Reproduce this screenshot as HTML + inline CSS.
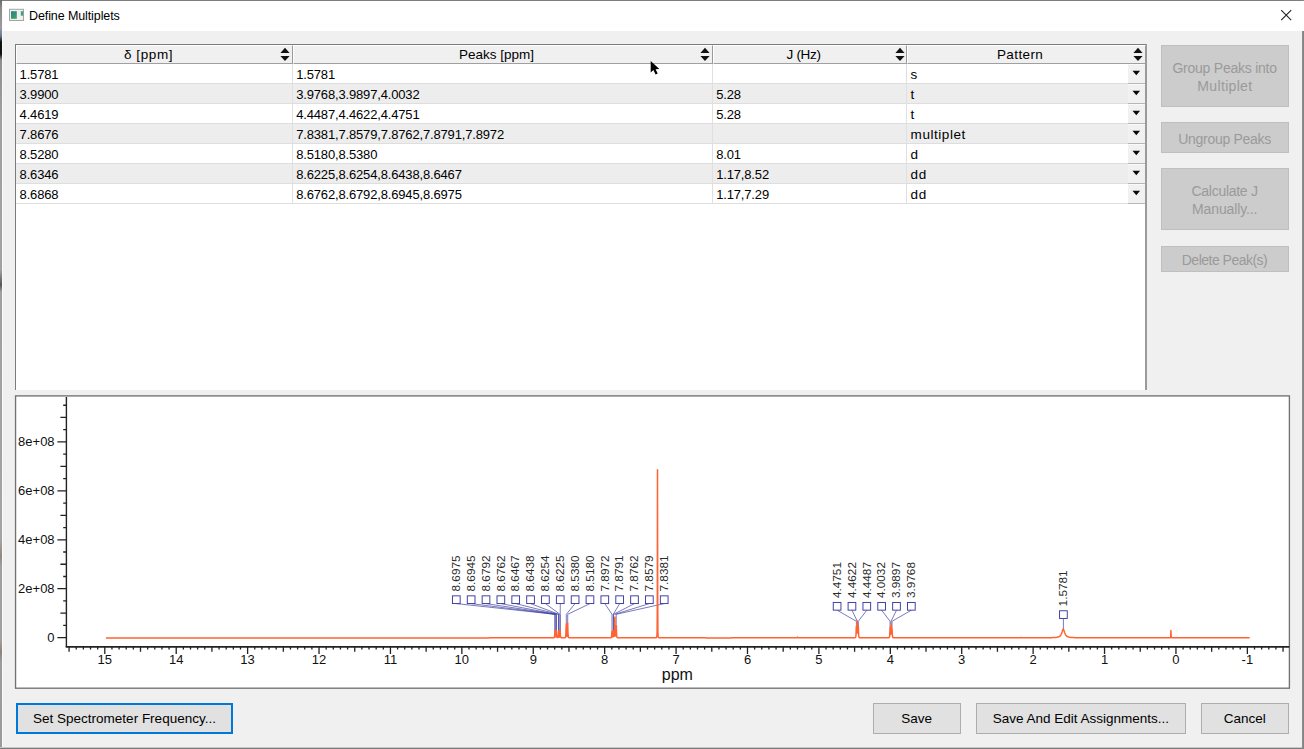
<!DOCTYPE html>
<html><head><meta charset="utf-8"><title>Define Multiplets</title>
<style>
html,body{margin:0;padding:0;}
body{width:1304px;height:749px;overflow:hidden;background:#3a3a3c;font-family:"Liberation Sans",sans-serif;position:relative;}
.abs{position:absolute;}
#win{position:absolute;left:2px;top:1px;width:1300px;height:746px;background:#f0f0f0;border-left:1px solid #fafafa;box-sizing:border-box;}
#title{position:absolute;left:0;top:0;width:1301px;height:29.5px;background:#fff;}
#ttext{position:absolute;left:27px;top:7px;font-size:12.5px;line-height:16px;color:#000;white-space:nowrap;letter-spacing:-0.1px;}
.tbl{position:absolute;left:15px;top:44px;width:1132px;height:346px;background:#fff;border:1px solid #7c7c7c;border-bottom:none;border-right:2px solid #9a9a9a;box-sizing:border-box;}
.hdr{position:absolute;top:45px;height:17px;background:#f0f0f0;border-top:1px solid #fff;border-left:1px solid #fff;border-bottom:1px solid #a0a0a0;border-right:1px solid #9a9a9a;box-sizing:content-box;}
.ht{position:absolute;top:45px;height:19px;line-height:19px;font-size:13.5px;color:#000;text-align:center;white-space:nowrap;}
.row{position:absolute;left:16px;width:1129px;height:19px;border-bottom:1px solid #dedede;}
.alt{background:#ededed;}
.c{position:absolute;font-size:13px;line-height:20px;height:20px;color:#000;white-space:nowrap;letter-spacing:-0.16px;}
.vl{position:absolute;width:1px;background:#e0e0e0;top:64px;height:140px;}
.cb{position:absolute;left:1128px;width:17px;height:20px;background:#f1f1f1;border-bottom:1px solid #b8b8b8;border-top:1px solid #fafafa;box-sizing:border-box;}
.dbtn{position:absolute;left:1160.5px;width:128.5px;background:#cccccc;border:1px solid #bfbfbf;box-sizing:border-box;color:#9a9a9a;font-size:14px;text-align:center;white-space:nowrap;}
.btn{position:absolute;top:703px;height:31px;background:#e1e1e1;border:1px solid #adadad;box-sizing:border-box;color:#000;font-size:13.5px;line-height:29.6px;text-align:center;white-space:nowrap;}
</style></head><body>

<div class="abs" style="left:0;top:0;width:1304px;height:1px;background:#7e7e7e"></div>
<div class="abs" style="left:0;top:0;width:2px;height:749px;background:linear-gradient(#6a6a6a 0px,#8a8a8a 8px,#9a9aa2 28px,#6a7690 36px,#111 42px,#111 54px,#8e8e90 60px,#a0a0a2 120px,#a2a2a4 270px,#555 285px,#a0a0a2 292px,#a4a4a6 540px,#94867c 556px,#a0a0a0 566px,#a0a0a0 640px,#90827a 652px,#9c9c9c 662px,#9a9a9a 749px)"></div>
<div class="abs" style="left:0;top:747px;width:1304px;height:1px;background:#c8c8c8"></div>
<div class="abs" style="left:0;top:748px;width:1304px;height:1px;background:#7a7a7a"></div>
<div class="abs" style="left:1302px;top:0;width:2px;height:749px;background:linear-gradient(90deg,#909090,#808080)"></div>
<div id="win">
<div id="title"></div>
</div>
<svg class="abs" style="left:8px;top:8px" width="17" height="14" viewBox="0 0 17 14">
<defs><linearGradient id="ig" x1="0" y1="0" x2="0.6" y2="1"><stop offset="0" stop-color="#2b7b9a"/><stop offset="1" stop-color="#37a45c"/></linearGradient></defs>
<rect x="1.5" y="1.3" width="14" height="11.2" fill="#f0f0f0" stroke="#a4a4a4" stroke-width="1"/>
<rect x="3" y="3.2" width="5.8" height="7.6" fill="url(#ig)"/>
<rect x="12.8" y="3.2" width="2.4" height="4.5" fill="#4a9a88"/>
</svg>
<div id="ttext" class="abs" style="left:29px;top:8.2px">Define Multiplets</div>
<svg class="abs" style="left:1279px;top:8px" width="14" height="14" viewBox="0 0 14 14"><path d="M2.2 2.2 L12.2 12.2 M12.2 2.2 L2.2 12.2" stroke="#222" stroke-width="1.1" fill="none"/></svg>
<div class="tbl"></div>
<div class="hdr" style="left:16px;width:275px"></div>
<div class="ht" style="left:88.5px;width:120px;letter-spacing:0.6px">δ [ppm]</div>
<svg class="abs" style="left:279.3px;top:46px" width="12" height="17" viewBox="0 0 12 17"><path d="M6 1.8 L10.6 6.9 L1.4 6.9 Z M6 15 L10.6 9.9 L1.4 9.9 Z" fill="#111"/></svg>
<div class="hdr" style="left:293px;width:418px"></div>
<div class="ht" style="left:436.5px;width:120px;letter-spacing:0.0px">Peaks [ppm]</div>
<svg class="abs" style="left:699.0px;top:46px" width="12" height="17" viewBox="0 0 12 17"><path d="M6 1.8 L10.6 6.9 L1.4 6.9 Z M6 15 L10.6 9.9 L1.4 9.9 Z" fill="#111"/></svg>
<div class="hdr" style="left:713px;width:192px"></div>
<div class="ht" style="left:743.6px;width:120px;letter-spacing:-0.3px">J (Hz)</div>
<svg class="abs" style="left:893.5px;top:46px" width="12" height="17" viewBox="0 0 12 17"><path d="M6 1.8 L10.6 6.9 L1.4 6.9 Z M6 15 L10.6 9.9 L1.4 9.9 Z" fill="#111"/></svg>
<div class="hdr" style="left:907px;width:237px"></div>
<div class="ht" style="left:960.1px;width:120px;letter-spacing:0.4px">Pattern</div>
<svg class="abs" style="left:1131.7px;top:46px" width="12" height="17" viewBox="0 0 12 17"><path d="M6 1.8 L10.6 6.9 L1.4 6.9 Z M6 15 L10.6 9.9 L1.4 9.9 Z" fill="#111"/></svg>
<div class="row" style="top:64px"></div>
<div class="row alt" style="top:84px"></div>
<div class="row" style="top:104px"></div>
<div class="row alt" style="top:124px"></div>
<div class="row" style="top:144px"></div>
<div class="row alt" style="top:164px"></div>
<div class="row" style="top:184px"></div>
<div class="vl" style="left:292px"></div>
<div class="vl" style="left:712px"></div>
<div class="vl" style="left:906px"></div>
<div class="c" style="left:19.6px;top:64.5px;">1.5781</div>
<div class="c" style="left:296.2px;top:64.5px;">1.5781</div>
<div class="c" style="left:910.6px;top:64.5px;letter-spacing:0.55px;font-size:13.5px;">s</div>
<div class="cb" style="top:64px"></div>
<svg class="abs" style="left:1131px;top:70px" width="11" height="7" viewBox="0 0 11 7"><path d="M1.5 0.8 L9.1 0.8 L5.3 5.3 Z" fill="#0a0a0a"/></svg>
<div class="c" style="left:19.6px;top:84.5px;">3.9900</div>
<div class="c" style="left:296.2px;top:84.5px;">3.9768,3.9897,4.0032</div>
<div class="c" style="left:716.2px;top:84.5px;">5.28</div>
<div class="c" style="left:910.6px;top:84.5px;letter-spacing:0.55px;font-size:13.5px;">t</div>
<div class="cb" style="top:84px"></div>
<svg class="abs" style="left:1131px;top:90px" width="11" height="7" viewBox="0 0 11 7"><path d="M1.5 0.8 L9.1 0.8 L5.3 5.3 Z" fill="#0a0a0a"/></svg>
<div class="c" style="left:19.6px;top:104.5px;">4.4619</div>
<div class="c" style="left:296.2px;top:104.5px;">4.4487,4.4622,4.4751</div>
<div class="c" style="left:716.2px;top:104.5px;">5.28</div>
<div class="c" style="left:910.6px;top:104.5px;letter-spacing:0.55px;font-size:13.5px;">t</div>
<div class="cb" style="top:104px"></div>
<svg class="abs" style="left:1131px;top:110px" width="11" height="7" viewBox="0 0 11 7"><path d="M1.5 0.8 L9.1 0.8 L5.3 5.3 Z" fill="#0a0a0a"/></svg>
<div class="c" style="left:19.6px;top:124.5px;">7.8676</div>
<div class="c" style="left:296.2px;top:124.5px;">7.8381,7.8579,7.8762,7.8791,7.8972</div>
<div class="c" style="left:910.6px;top:124.5px;letter-spacing:0.55px;font-size:13.5px;">multiplet</div>
<div class="cb" style="top:124px"></div>
<svg class="abs" style="left:1131px;top:130px" width="11" height="7" viewBox="0 0 11 7"><path d="M1.5 0.8 L9.1 0.8 L5.3 5.3 Z" fill="#0a0a0a"/></svg>
<div class="c" style="left:19.6px;top:144.5px;">8.5280</div>
<div class="c" style="left:296.2px;top:144.5px;">8.5180,8.5380</div>
<div class="c" style="left:716.2px;top:144.5px;">8.01</div>
<div class="c" style="left:910.6px;top:144.5px;letter-spacing:0.55px;font-size:13.5px;">d</div>
<div class="cb" style="top:144px"></div>
<svg class="abs" style="left:1131px;top:150px" width="11" height="7" viewBox="0 0 11 7"><path d="M1.5 0.8 L9.1 0.8 L5.3 5.3 Z" fill="#0a0a0a"/></svg>
<div class="c" style="left:19.6px;top:164.5px;">8.6346</div>
<div class="c" style="left:296.2px;top:164.5px;">8.6225,8.6254,8.6438,8.6467</div>
<div class="c" style="left:716.2px;top:164.5px;">1.17,8.52</div>
<div class="c" style="left:910.6px;top:164.5px;letter-spacing:0.55px;font-size:13.5px;">dd</div>
<div class="cb" style="top:164px"></div>
<svg class="abs" style="left:1131px;top:170px" width="11" height="7" viewBox="0 0 11 7"><path d="M1.5 0.8 L9.1 0.8 L5.3 5.3 Z" fill="#0a0a0a"/></svg>
<div class="c" style="left:19.6px;top:184.5px;">8.6868</div>
<div class="c" style="left:296.2px;top:184.5px;">8.6762,8.6792,8.6945,8.6975</div>
<div class="c" style="left:716.2px;top:184.5px;">1.17,7.29</div>
<div class="c" style="left:910.6px;top:184.5px;letter-spacing:0.55px;font-size:13.5px;">dd</div>
<div class="cb" style="top:184px"></div>
<svg class="abs" style="left:1131px;top:190px" width="11" height="7" viewBox="0 0 11 7"><path d="M1.5 0.8 L9.1 0.8 L5.3 5.3 Z" fill="#0a0a0a"/></svg>
<div class="dbtn" style="top:45px;height:62px;padding-top:12.9px"><div style="line-height:18.3px;letter-spacing:-0.24px;margin-right:0.24px">Group Peaks into</div><div style="line-height:18.3px;letter-spacing:0.33px;margin-right:-0.33px">Multiplet</div></div>
<div class="dbtn" style="top:122px;height:31px;padding-top:6.5px"><div style="line-height:18.3px;letter-spacing:-0.3px;margin-right:0.3px">Ungroup Peaks</div></div>
<div class="dbtn" style="top:168px;height:62px;padding-top:12.9px"><div style="line-height:18.3px;letter-spacing:-0.28px;margin-right:0.28px">Calculate J</div><div style="line-height:18.3px;letter-spacing:-0.13px;margin-right:0.13px">Manually...</div></div>
<div class="dbtn" style="top:245.5px;height:26.5px;padding-top:4.3px"><div style="line-height:18.3px;letter-spacing:-0.51px;margin-right:0.51px">Delete Peak(s)</div></div>
<div class="btn" style="left:16px;width:217px;border:2px solid #0078d7;line-height:27.6px;background:#e1e1e1">Set Spectrometer Frequency...</div>
<div class="btn" style="left:873px;width:87.5px">Save</div>
<div class="btn" style="left:976.3px;width:209.3px">Save And Edit Assignments...</div>
<div class="btn" style="left:1201px;width:87.6px">Cancel</div>
<svg class="abs" style="left:649px;top:59px" width="14" height="18" viewBox="0 0 14 18"><path d="M1.7 2 L1.7 13.4 L4.4 11 L6.6 15.6 L8.7 14.6 L6.6 10.2 L10.4 10 Z" fill="#000"/></svg>
<svg class="abs" style="left:0;top:0" width="1304" height="749"><rect x="15.55" y="395.9" width="1273.85" height="292.3" fill="#fff" stroke="#727272" stroke-width="1.35"/></svg>
<svg class="abs" style="left:0;top:0" width="1304" height="749" viewBox="0 0 1304 749" font-family="Liberation Sans, sans-serif">
<g stroke="#222" fill="none">
<path d="M66.4 397 V646.9" stroke-width="1.4"/>
<path d="M65.7 646.85 H1289.3" stroke-width="1.6"/>
<path d="M57.4 637.65 H66.4 M63.2 625.42 H66.4 M60.4 613.18 H66.4 M63.2 600.95 H66.4 M57.4 588.72 H66.4 M63.2 576.49 H66.4 M60.4 564.25 H66.4 M63.2 552.02 H66.4 M57.4 539.79 H66.4 M63.2 527.56 H66.4 M60.4 515.32 H66.4 M63.2 503.09 H66.4 M57.4 490.86 H66.4 M63.2 478.63 H66.4 M60.4 466.39 H66.4 M63.2 454.16 H66.4 M57.4 441.93 H66.4 M63.2 429.70 H66.4 M60.4 417.46 H66.4 M63.2 405.23 H66.4 " stroke-width="1.3"/>
<path d="M1283.06 646.9 V651.7 M1275.92 646.9 V649.5 M1268.78 646.9 V649.5 M1261.64 646.9 V649.5 M1254.50 646.9 V649.5 M1247.36 646.9 V653.9 M1240.22 646.9 V649.5 M1233.08 646.9 V649.5 M1225.94 646.9 V649.5 M1218.80 646.9 V649.5 M1211.65 646.9 V651.7 M1204.51 646.9 V649.5 M1197.37 646.9 V649.5 M1190.23 646.9 V649.5 M1183.09 646.9 V649.5 M1175.95 646.9 V653.9 M1168.81 646.9 V649.5 M1161.67 646.9 V649.5 M1154.53 646.9 V649.5 M1147.39 646.9 V649.5 M1140.24 646.9 V651.7 M1133.10 646.9 V649.5 M1125.96 646.9 V649.5 M1118.82 646.9 V649.5 M1111.68 646.9 V649.5 M1104.54 646.9 V653.9 M1097.40 646.9 V649.5 M1090.26 646.9 V649.5 M1083.12 646.9 V649.5 M1075.98 646.9 V649.5 M1068.84 646.9 V651.7 M1061.69 646.9 V649.5 M1054.55 646.9 V649.5 M1047.41 646.9 V649.5 M1040.27 646.9 V649.5 M1033.13 646.9 V653.9 M1025.99 646.9 V649.5 M1018.85 646.9 V649.5 M1011.71 646.9 V649.5 M1004.57 646.9 V649.5 M997.42 646.9 V651.7 M990.28 646.9 V649.5 M983.14 646.9 V649.5 M976.00 646.9 V649.5 M968.86 646.9 V649.5 M961.72 646.9 V653.9 M954.58 646.9 V649.5 M947.44 646.9 V649.5 M940.30 646.9 V649.5 M933.16 646.9 V649.5 M926.01 646.9 V651.7 M918.87 646.9 V649.5 M911.73 646.9 V649.5 M904.59 646.9 V649.5 M897.45 646.9 V649.5 M890.31 646.9 V653.9 M883.17 646.9 V649.5 M876.03 646.9 V649.5 M868.89 646.9 V649.5 M861.75 646.9 V649.5 M854.60 646.9 V651.7 M847.46 646.9 V649.5 M840.32 646.9 V649.5 M833.18 646.9 V649.5 M826.04 646.9 V649.5 M818.90 646.9 V653.9 M811.76 646.9 V649.5 M804.62 646.9 V649.5 M797.48 646.9 V649.5 M790.34 646.9 V649.5 M783.19 646.9 V651.7 M776.05 646.9 V649.5 M768.91 646.9 V649.5 M761.77 646.9 V649.5 M754.63 646.9 V649.5 M747.49 646.9 V653.9 M740.35 646.9 V649.5 M733.21 646.9 V649.5 M726.07 646.9 V649.5 M718.93 646.9 V649.5 M711.78 646.9 V651.7 M704.64 646.9 V649.5 M697.50 646.9 V649.5 M690.36 646.9 V649.5 M683.22 646.9 V649.5 M676.08 646.9 V653.9 M668.94 646.9 V649.5 M661.80 646.9 V649.5 M654.66 646.9 V649.5 M647.52 646.9 V649.5 M640.37 646.9 V651.7 M633.23 646.9 V649.5 M626.09 646.9 V649.5 M618.95 646.9 V649.5 M611.81 646.9 V649.5 M604.67 646.9 V653.9 M597.53 646.9 V649.5 M590.39 646.9 V649.5 M583.25 646.9 V649.5 M576.11 646.9 V649.5 M568.96 646.9 V651.7 M561.82 646.9 V649.5 M554.68 646.9 V649.5 M547.54 646.9 V649.5 M540.40 646.9 V649.5 M533.26 646.9 V653.9 M526.12 646.9 V649.5 M518.98 646.9 V649.5 M511.84 646.9 V649.5 M504.70 646.9 V649.5 M497.56 646.9 V651.7 M490.41 646.9 V649.5 M483.27 646.9 V649.5 M476.13 646.9 V649.5 M468.99 646.9 V649.5 M461.85 646.9 V653.9 M454.71 646.9 V649.5 M447.57 646.9 V649.5 M440.43 646.9 V649.5 M433.29 646.9 V649.5 M426.14 646.9 V651.7 M419.00 646.9 V649.5 M411.86 646.9 V649.5 M404.72 646.9 V649.5 M397.58 646.9 V649.5 M390.44 646.9 V653.9 M383.30 646.9 V649.5 M376.16 646.9 V649.5 M369.02 646.9 V649.5 M361.88 646.9 V649.5 M354.74 646.9 V651.7 M347.59 646.9 V649.5 M340.45 646.9 V649.5 M333.31 646.9 V649.5 M326.17 646.9 V649.5 M319.03 646.9 V653.9 M311.89 646.9 V649.5 M304.75 646.9 V649.5 M297.61 646.9 V649.5 M290.47 646.9 V649.5 M283.32 646.9 V651.7 M276.18 646.9 V649.5 M269.04 646.9 V649.5 M261.90 646.9 V649.5 M254.76 646.9 V649.5 M247.62 646.9 V653.9 M240.48 646.9 V649.5 M233.34 646.9 V649.5 M226.20 646.9 V649.5 M219.06 646.9 V649.5 M211.91 646.9 V651.7 M204.77 646.9 V649.5 M197.63 646.9 V649.5 M190.49 646.9 V649.5 M183.35 646.9 V649.5 M176.21 646.9 V653.9 M169.07 646.9 V649.5 M161.93 646.9 V649.5 M154.79 646.9 V649.5 M147.65 646.9 V649.5 M140.50 646.9 V651.7 M133.36 646.9 V649.5 M126.22 646.9 V649.5 M119.08 646.9 V649.5 M111.94 646.9 V649.5 M104.80 646.9 V653.9 M97.66 646.9 V649.5 M90.52 646.9 V649.5 M83.38 646.9 V649.5 M76.24 646.9 V649.5 M69.09 646.9 V651.7 " stroke-width="1.3"/>
</g>
<g font-size="13" fill="#111">
<text x="54.6" y="641.6" text-anchor="end">0</text>
<text x="54.6" y="592.6" text-anchor="end">2e+08</text>
<text x="54.6" y="543.7" text-anchor="end">4e+08</text>
<text x="54.6" y="494.8" text-anchor="end">6e+08</text>
<text x="54.6" y="445.8" text-anchor="end">8e+08</text>
<text x="1247.4" y="664" text-anchor="middle">-1</text>
<text x="1175.9" y="664" text-anchor="middle">0</text>
<text x="1104.5" y="664" text-anchor="middle">1</text>
<text x="1033.1" y="664" text-anchor="middle">2</text>
<text x="961.7" y="664" text-anchor="middle">3</text>
<text x="890.3" y="664" text-anchor="middle">4</text>
<text x="818.9" y="664" text-anchor="middle">5</text>
<text x="747.5" y="664" text-anchor="middle">6</text>
<text x="676.1" y="664" text-anchor="middle">7</text>
<text x="604.7" y="664" text-anchor="middle">8</text>
<text x="533.3" y="664" text-anchor="middle">9</text>
<text x="461.8" y="664" text-anchor="middle">10</text>
<text x="390.4" y="664" text-anchor="middle">11</text>
<text x="319.0" y="664" text-anchor="middle">12</text>
<text x="247.6" y="664" text-anchor="middle">13</text>
<text x="176.2" y="664" text-anchor="middle">14</text>
<text x="104.8" y="664" text-anchor="middle">15</text>
</g>
<text x="677.3" y="680.4" font-size="16" text-anchor="middle" fill="#111">ppm</text>
<path d="M456.3 603.6 L554.9 614.3 V631.8" stroke="#3a3a9e" stroke-width="0.85" fill="none" opacity="0.8"/>
<rect x="452.45" y="595.85" width="7.7" height="7.7" fill="#fff" stroke="#3a3a9e" stroke-width="0.95"/>
<text transform="translate(460.0 591.5) rotate(-90)" font-size="11.8" fill="#2a2a2a">8.6975</text>
<path d="M471.2 603.6 L555.1 614.3 V631.8" stroke="#3a3a9e" stroke-width="0.85" fill="none" opacity="0.8"/>
<rect x="467.30" y="595.85" width="7.7" height="7.7" fill="#fff" stroke="#3a3a9e" stroke-width="0.95"/>
<text transform="translate(474.9 591.5) rotate(-90)" font-size="11.8" fill="#2a2a2a">8.6945</text>
<path d="M486.0 603.6 L556.2 614.3 V631.8" stroke="#3a3a9e" stroke-width="0.85" fill="none" opacity="0.8"/>
<rect x="482.15" y="595.85" width="7.7" height="7.7" fill="#fff" stroke="#3a3a9e" stroke-width="0.95"/>
<text transform="translate(489.7 591.5) rotate(-90)" font-size="11.8" fill="#2a2a2a">8.6792</text>
<path d="M500.9 603.6 L556.4 614.3 V631.8" stroke="#3a3a9e" stroke-width="0.85" fill="none" opacity="0.8"/>
<rect x="497.00" y="595.85" width="7.7" height="7.7" fill="#fff" stroke="#3a3a9e" stroke-width="0.95"/>
<text transform="translate(504.6 591.5) rotate(-90)" font-size="11.8" fill="#2a2a2a">8.6762</text>
<path d="M515.7 603.6 L558.5 614.3 V631.5" stroke="#3a3a9e" stroke-width="0.85" fill="none" opacity="0.8"/>
<rect x="511.85" y="595.85" width="7.7" height="7.7" fill="#fff" stroke="#3a3a9e" stroke-width="0.95"/>
<text transform="translate(519.4 591.5) rotate(-90)" font-size="11.8" fill="#2a2a2a">8.6467</text>
<path d="M530.6 603.6 L558.7 614.3 V631.3" stroke="#3a3a9e" stroke-width="0.85" fill="none" opacity="0.8"/>
<rect x="526.70" y="595.85" width="7.7" height="7.7" fill="#fff" stroke="#3a3a9e" stroke-width="0.95"/>
<text transform="translate(534.2 591.5) rotate(-90)" font-size="11.8" fill="#2a2a2a">8.6438</text>
<path d="M545.4 603.6 L560.0 614.3 V631.3" stroke="#3a3a9e" stroke-width="0.85" fill="none" opacity="0.8"/>
<rect x="541.55" y="595.85" width="7.7" height="7.7" fill="#fff" stroke="#3a3a9e" stroke-width="0.95"/>
<text transform="translate(549.1 591.5) rotate(-90)" font-size="11.8" fill="#2a2a2a">8.6254</text>
<path d="M560.3 603.6 L560.2 614.3 V631.5" stroke="#3a3a9e" stroke-width="0.85" fill="none" opacity="0.8"/>
<rect x="556.40" y="595.85" width="7.7" height="7.7" fill="#fff" stroke="#3a3a9e" stroke-width="0.95"/>
<text transform="translate(564.0 591.5) rotate(-90)" font-size="11.8" fill="#2a2a2a">8.6225</text>
<path d="M575.1 603.6 L566.3 614.3 V623.5" stroke="#3a3a9e" stroke-width="0.85" fill="none" opacity="0.8"/>
<rect x="571.25" y="595.85" width="7.7" height="7.7" fill="#fff" stroke="#3a3a9e" stroke-width="0.95"/>
<text transform="translate(578.8 591.5) rotate(-90)" font-size="11.8" fill="#2a2a2a">8.5380</text>
<path d="M590.0 603.6 L567.7 614.3 V623.5" stroke="#3a3a9e" stroke-width="0.85" fill="none" opacity="0.8"/>
<rect x="586.10" y="595.85" width="7.7" height="7.7" fill="#fff" stroke="#3a3a9e" stroke-width="0.95"/>
<text transform="translate(593.6 591.5) rotate(-90)" font-size="11.8" fill="#2a2a2a">8.5180</text>
<path d="M604.8 603.6 L612.0 614.3 V630.1" stroke="#3a3a9e" stroke-width="0.85" fill="none" opacity="0.8"/>
<rect x="600.95" y="595.85" width="7.7" height="7.7" fill="#fff" stroke="#3a3a9e" stroke-width="0.95"/>
<text transform="translate(608.5 591.5) rotate(-90)" font-size="11.8" fill="#2a2a2a">7.8972</text>
<path d="M619.7 603.6 L613.3 614.3 V631.5" stroke="#3a3a9e" stroke-width="0.85" fill="none" opacity="0.8"/>
<rect x="615.80" y="595.85" width="7.7" height="7.7" fill="#fff" stroke="#3a3a9e" stroke-width="0.95"/>
<text transform="translate(623.4 591.5) rotate(-90)" font-size="11.8" fill="#2a2a2a">7.8791</text>
<path d="M634.5 603.6 L613.5 614.3 V631.6" stroke="#3a3a9e" stroke-width="0.85" fill="none" opacity="0.8"/>
<rect x="630.65" y="595.85" width="7.7" height="7.7" fill="#fff" stroke="#3a3a9e" stroke-width="0.95"/>
<text transform="translate(638.2 591.5) rotate(-90)" font-size="11.8" fill="#2a2a2a">7.8762</text>
<path d="M649.4 603.6 L614.8 614.3 V614.7" stroke="#3a3a9e" stroke-width="0.85" fill="none" opacity="0.8"/>
<rect x="645.50" y="595.85" width="7.7" height="7.7" fill="#fff" stroke="#3a3a9e" stroke-width="0.95"/>
<text transform="translate(653.0 591.5) rotate(-90)" font-size="11.8" fill="#2a2a2a">7.8579</text>
<path d="M664.2 603.6 L616.2 614.3 V624.8" stroke="#3a3a9e" stroke-width="0.85" fill="none" opacity="0.8"/>
<rect x="660.35" y="595.85" width="7.7" height="7.7" fill="#fff" stroke="#3a3a9e" stroke-width="0.95"/>
<text transform="translate(667.9 591.5) rotate(-90)" font-size="11.8" fill="#2a2a2a">7.8381</text>
<path d="M837.1 610.2 L856.4 621.3 V625.6" stroke="#3a3a9e" stroke-width="0.85" fill="none" opacity="0.8"/>
<rect x="833.25" y="602.45" width="7.7" height="7.7" fill="#fff" stroke="#3a3a9e" stroke-width="0.95"/>
<text transform="translate(840.8 598.1) rotate(-90)" font-size="11.8" fill="#2a2a2a">4.4751</text>
<path d="M852.0 610.2 L857.3 621.3 V621.3" stroke="#3a3a9e" stroke-width="0.85" fill="none" opacity="0.8"/>
<rect x="848.10" y="602.45" width="7.7" height="7.7" fill="#fff" stroke="#3a3a9e" stroke-width="0.95"/>
<text transform="translate(855.6 598.1) rotate(-90)" font-size="11.8" fill="#2a2a2a">4.4622</text>
<path d="M866.8 610.2 L858.3 621.3 V625.7" stroke="#3a3a9e" stroke-width="0.85" fill="none" opacity="0.8"/>
<rect x="862.95" y="602.45" width="7.7" height="7.7" fill="#fff" stroke="#3a3a9e" stroke-width="0.95"/>
<text transform="translate(870.5 598.1) rotate(-90)" font-size="11.8" fill="#2a2a2a">4.4487</text>
<path d="M881.6 610.2 L890.1 621.3 V627.8" stroke="#3a3a9e" stroke-width="0.85" fill="none" opacity="0.8"/>
<rect x="877.80" y="602.45" width="7.7" height="7.7" fill="#fff" stroke="#3a3a9e" stroke-width="0.95"/>
<text transform="translate(885.3 598.1) rotate(-90)" font-size="11.8" fill="#2a2a2a">4.0032</text>
<path d="M896.5 610.2 L891.0 621.3 V623.7" stroke="#3a3a9e" stroke-width="0.85" fill="none" opacity="0.8"/>
<rect x="892.65" y="602.45" width="7.7" height="7.7" fill="#fff" stroke="#3a3a9e" stroke-width="0.95"/>
<text transform="translate(900.2 598.1) rotate(-90)" font-size="11.8" fill="#2a2a2a">3.9897</text>
<path d="M911.4 610.2 L892.0 621.3 V627.7" stroke="#3a3a9e" stroke-width="0.85" fill="none" opacity="0.8"/>
<rect x="907.50" y="602.45" width="7.7" height="7.7" fill="#fff" stroke="#3a3a9e" stroke-width="0.95"/>
<text transform="translate(915.0 598.1) rotate(-90)" font-size="11.8" fill="#2a2a2a">3.9768</text>
<path d="M1063.4 618.5 V629.4" stroke="#3a3a9e" stroke-width="0.85" fill="none" opacity="0.8"/>
<rect x="1059.55" y="610.75" width="7.7" height="7.7" fill="#fff" stroke="#3a3a9e" stroke-width="0.95"/>
<text transform="translate(1067.1 606.4) rotate(-90)" font-size="11.8" fill="#2a2a2a">1.5781</text>
<path d="M105.9 637.9 L488.9 637.9 L489.1 637.8 L553.7 637.8 L553.9 637.7 L554.1 637.6 L554.3 637.4 L554.5 636.8 L554.7 634.8 L554.9 630.8 L555.1 632.0 L555.3 635.6 L555.5 636.8 L555.7 636.9 L555.9 636.0 L556.1 633.0 L556.3 630.3 L556.5 634.1 L556.7 636.5 L556.9 637.3 L557.1 637.5 L557.3 637.6 L557.7 637.6 L557.9 637.4 L558.1 636.8 L558.3 635.1 L558.5 631.0 L558.7 631.1 L558.9 635.2 L559.1 636.8 L559.3 637.2 L559.5 637.1 L559.7 636.3 L559.9 633.6 L560.1 629.8 L560.3 633.1 L560.5 636.2 L560.7 637.2 L560.9 637.5 L561.1 637.7 L561.3 637.8 L564.7 637.8 L564.9 637.7 L565.1 637.7 L565.3 637.5 L565.5 637.2 L565.7 636.4 L565.9 634.1 L566.1 627.6 L566.3 623.7 L566.5 631.4 L566.7 635.3 L566.9 636.4 L567.1 636.2 L567.3 634.5 L567.5 628.8 L567.7 623.3 L567.9 630.5 L568.1 635.2 L568.3 636.8 L568.5 637.3 L568.7 637.6 L568.9 637.7 L569.1 637.7 L569.3 637.8 L610.7 637.8 L610.9 637.7 L611.1 637.6 L611.3 637.4 L611.5 636.9 L611.7 635.3 L611.9 631.3 L612.1 630.8 L612.3 634.9 L612.5 636.6 L612.7 637.0 L612.9 636.7 L613.1 635.2 L613.3 631.3 L613.5 631.1 L613.7 634.9 L613.9 636.3 L614.1 636.3 L614.3 635.1 L614.5 630.7 L614.7 619.2 L614.9 617.0 L615.1 629.2 L615.3 634.5 L615.5 636.0 L615.7 635.9 L615.9 633.8 L616.1 627.7 L616.3 625.5 L616.5 632.6 L616.7 636.0 L616.9 637.0 L617.1 637.4 L617.3 637.6 L617.5 637.7 L617.7 637.8 L655.9 637.8 L656.1 637.7 L656.3 637.6 L656.5 637.5 L656.7 637.1 L656.9 636.1 L657.1 632.4 L657.3 608.9 L657.5 469.8 L657.7 599.7 L657.9 631.3 L658.1 635.9 L658.3 637.0 L658.5 637.5 L658.7 637.6 L658.9 637.7 L659.1 637.8 L705.5 637.8 L705.7 637.9 L731.3 637.9 L731.5 637.8 L796.9 637.8 L797.1 637.7 L797.3 637.4 L797.5 637.1 L797.7 637.5 L797.9 637.7 L798.1 637.8 L854.7 637.8 L854.9 637.7 L855.1 637.7 L855.3 637.6 L855.5 637.4 L855.7 637.0 L855.9 635.9 L856.1 632.9 L856.3 626.6 L856.5 627.3 L856.7 632.3 L856.9 632.7 L857.1 627.6 L857.3 620.9 L857.5 627.3 L857.7 632.8 L857.9 633.2 L858.1 629.0 L858.3 625.6 L858.5 631.5 L858.7 635.4 L858.9 636.8 L859.1 637.3 L859.3 637.6 L859.5 637.7 L859.7 637.7 L859.9 637.8 L888.5 637.8 L888.7 637.7 L888.9 637.7 L889.1 637.6 L889.3 637.3 L889.5 636.8 L889.7 635.3 L889.9 631.2 L890.1 627.5 L890.3 631.7 L890.5 634.2 L890.7 632.9 L890.9 627.0 L891.1 624.0 L891.3 630.7 L891.5 633.8 L891.7 632.5 L891.9 628.0 L892.1 629.8 L892.3 634.6 L892.5 636.5 L892.7 637.2 L892.9 637.5 L893.1 637.7 L893.3 637.7 L893.5 637.8 L1020.5 637.8 L1020.7 637.7 L1020.9 637.4 L1021.1 637.4 L1021.3 637.7 L1021.5 637.8 L1047.3 637.8 L1047.5 637.7 L1052.1 637.7 L1052.3 637.6 L1054.1 637.6 L1054.3 637.5 L1055.5 637.5 L1055.7 637.4 L1056.3 637.4 L1056.5 637.3 L1056.9 637.3 L1057.1 637.2 L1057.5 637.2 L1057.7 637.1 L1057.9 637.1 L1058.1 637.0 L1058.3 636.9 L1058.5 636.9 L1058.7 636.8 L1058.9 636.7 L1059.1 636.6 L1059.3 636.5 L1059.5 636.4 L1059.7 636.2 L1059.9 636.1 L1060.1 635.9 L1060.3 635.7 L1060.5 635.5 L1060.7 635.2 L1060.9 634.9 L1061.1 634.5 L1061.3 634.1 L1061.5 633.6 L1061.7 633.1 L1061.9 632.5 L1062.1 631.9 L1062.3 631.2 L1062.5 630.6 L1062.7 630.0 L1062.9 629.5 L1063.1 629.2 L1063.3 629.2 L1063.5 629.3 L1063.7 629.7 L1063.9 630.2 L1064.1 630.9 L1064.3 631.5 L1064.5 632.2 L1064.7 632.8 L1064.9 633.3 L1065.1 633.8 L1065.3 634.3 L1065.5 634.7 L1065.7 635.0 L1065.9 635.3 L1066.1 635.6 L1066.3 635.8 L1066.5 636.0 L1066.7 636.1 L1066.9 636.3 L1067.1 636.4 L1067.3 636.5 L1067.5 636.6 L1067.7 636.7 L1067.9 636.8 L1068.1 636.9 L1068.3 637.0 L1068.5 637.0 L1068.7 637.1 L1068.9 637.1 L1069.1 637.2 L1069.5 637.2 L1069.7 637.3 L1070.1 637.3 L1070.3 637.4 L1070.9 637.4 L1071.1 637.5 L1072.1 637.5 L1072.3 637.6 L1074.3 637.6 L1074.5 637.7 L1078.9 637.7 L1079.1 637.8 L1170.3 637.8 L1170.5 637.6 L1170.7 636.8 L1170.9 630.6 L1171.1 635.0 L1171.3 637.4 L1171.5 637.7 L1171.7 637.8 L1249.7 637.8" stroke="#ff6233" stroke-width="1.5" fill="none" stroke-linejoin="round"/>
</svg>
</body></html>
